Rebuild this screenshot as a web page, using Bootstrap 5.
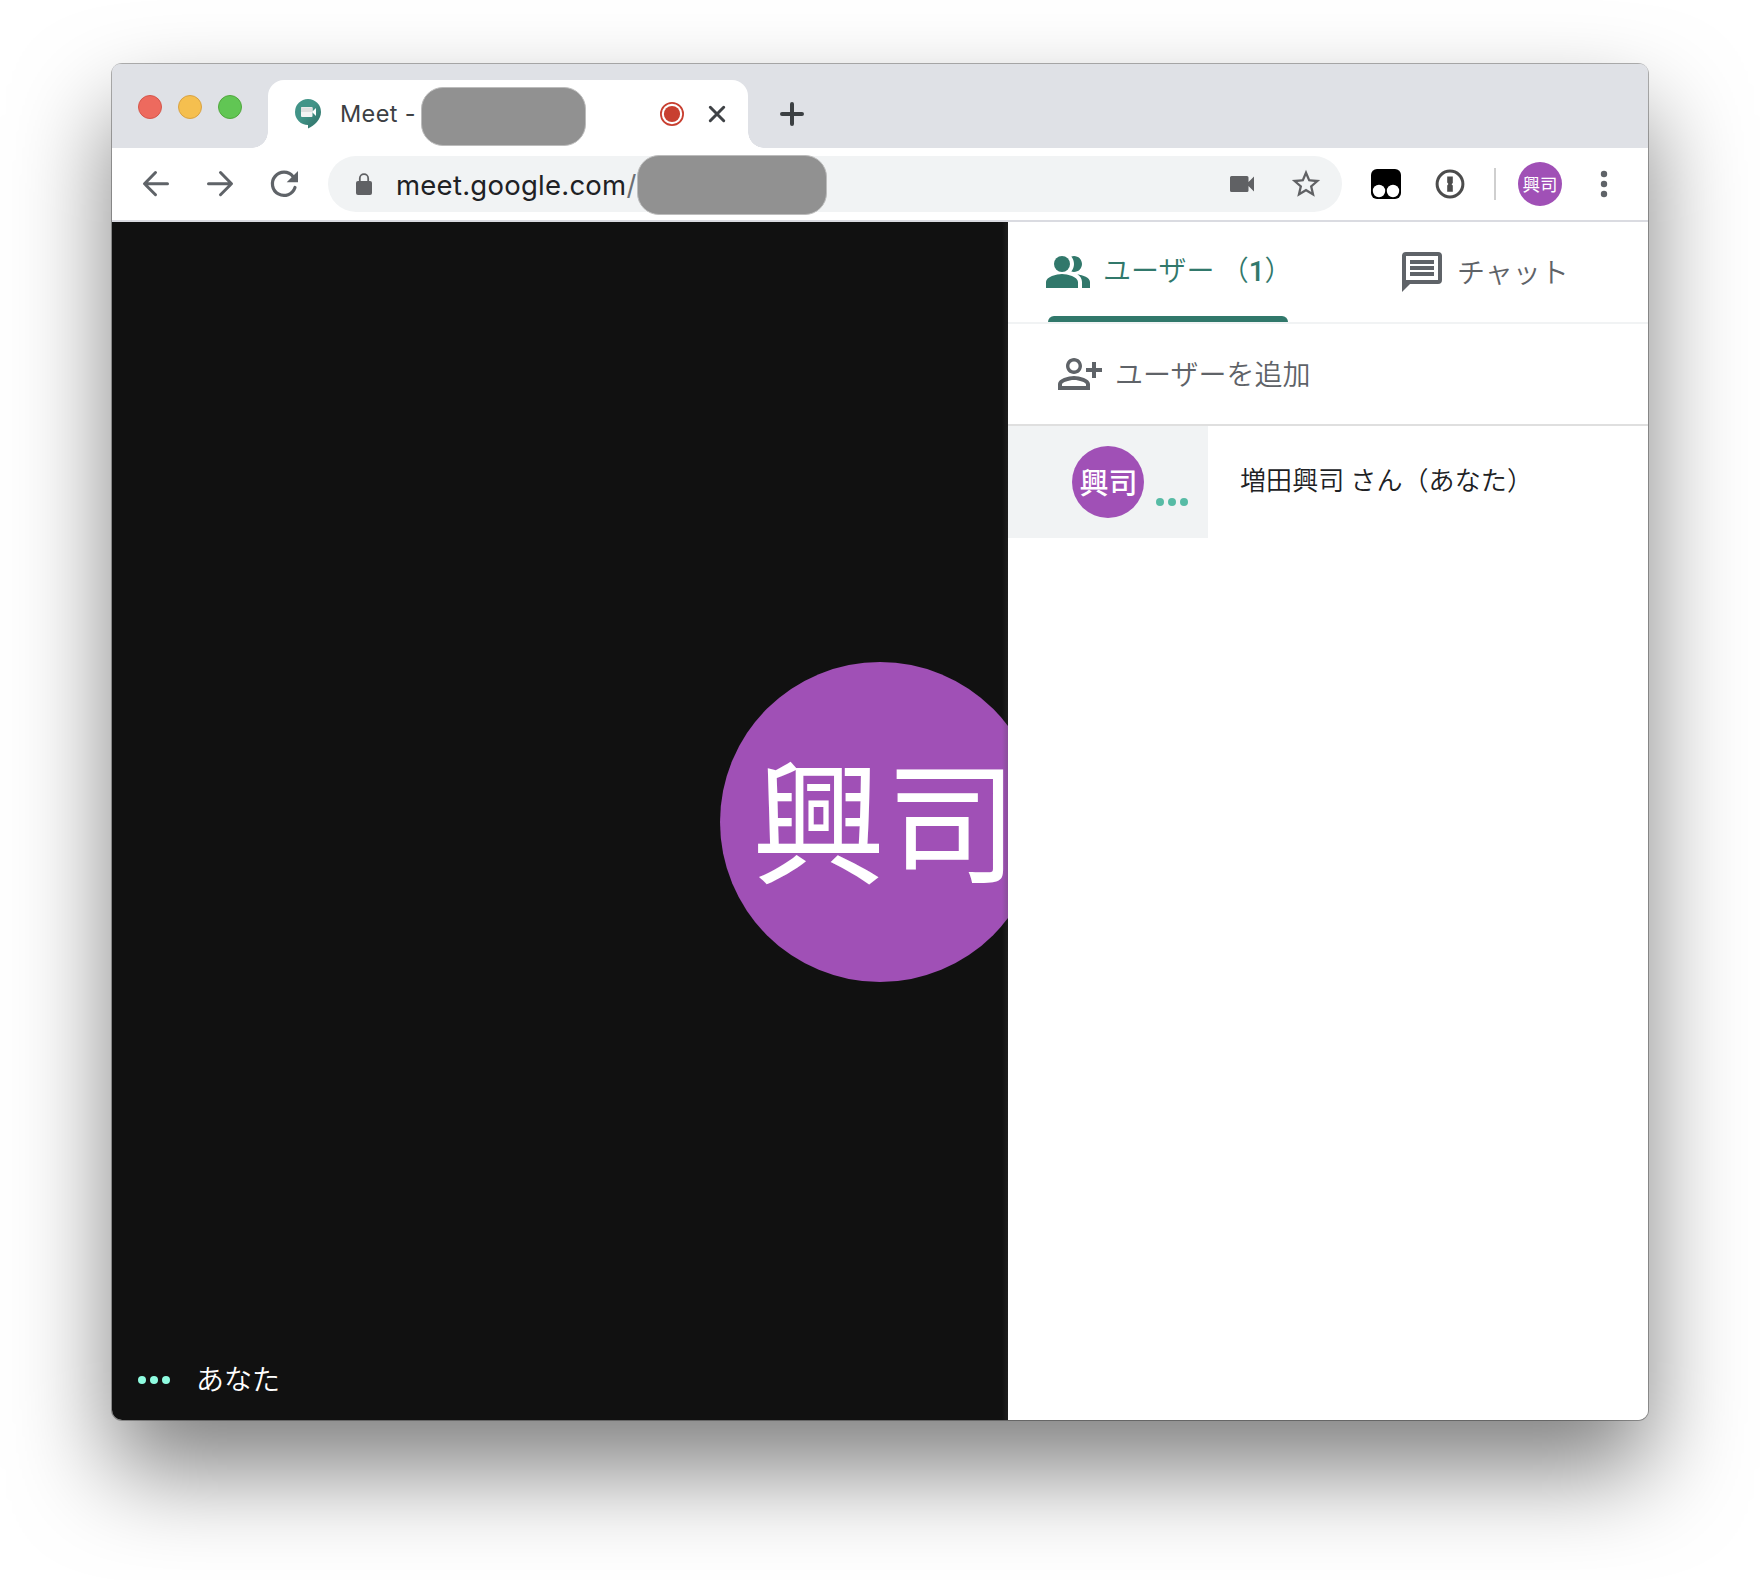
<!DOCTYPE html>
<html lang="ja">
<head>
<meta charset="utf-8">
<meta name="viewport" content="width=device-width, initial-scale=1">
<title>Meet</title>
<link href="https://cdn.jsdelivr.net/npm/bootstrap@5.3.0/dist/css/bootstrap.min.css" rel="stylesheet">
<style>
  body { background: #fff; width: 1760px; height: 1580px; overflow: hidden; padding: 64px 112px 160px; font-family: "Noto Sans CJK JP", sans-serif; }
  svg { display: block; flex: none; }
  .browser-win { height: 1356px; border-radius: 10px; box-shadow: 0 0 0 1px rgba(0,0,0,.3), 0 50px 96px rgba(0,0,0,.5); }
  .tab-strip { height: 84px; background: #dfe1e6; padding-top: 16px; }
  .lights { width: 156px; padding: 15px 0 0 26px; gap: 16px; }
  .light { width: 24px; height: 24px; border-radius: 50%; border: 1px solid; }
  .light-red { background: #ed6a5e; border-color: #d5564b; }
  .light-yellow { background: #f5bf4f; border-color: #d9a243; }
  .light-green { background: #61c654; border-color: #51a73e; }
  .page-tab { width: 480px; height: 68px; background: #fff; border-radius: 16px 16px 0 0; padding-left: 27px; }
  .page-tab::before, .page-tab::after { content: ""; position: absolute; bottom: 0; width: 16px; height: 16px; }
  .page-tab::before { left: -16px; background: radial-gradient(circle at 0 0, transparent 15.5px, #fff 16px); }
  .page-tab::after { right: -16px; background: radial-gradient(circle at 100% 0, transparent 15.5px, #fff 16px); }
  .tab-title { font: 400 23.5px/30px Inter, sans-serif; color: #3c4043; width: 81px; margin-left: 19px; letter-spacing: .35px; }
  .redact { background: #919191; border: 1px solid #bcbcbc; border-radius: 22px; flex: none; }
  .redact-title { width: 165px; height: 59px; margin-top: 4px; }
  .redact-url { width: 190px; height: 60px; margin: 2px 0 0 1px; }
  .tool-bar { height: 74px; border-bottom: 2px solid #dadbe1; background: #fff; padding-left: 28px; }
  .address { width: 1014px; height: 56px; border-radius: 28px; background: #f1f3f4; margin-left: 28px; padding: 0 19px 0 26px; }
  .address-text { font: 400 27.5px/36px Inter, sans-serif; letter-spacing: .25px; color: #202124; width: 240px; margin-left: 22px; padding-top: 2px; white-space: nowrap; }
  .address-text span { color: #6b6f74; }
  .mini-face { width: 44px; height: 44px; font-size: 17.5px; line-height: 44px; }
  .face { background: #a050b6; color: #fff; border-radius: 50%; text-align: center; flex: none; white-space: nowrap; }
  .stage { height: 1198px; }
  .video-pane { width: 896px; background: #111; overflow: hidden; border-bottom-left-radius: 10px; }
  .video-pane::after { content: ""; position: absolute; right: 0; top: 0; bottom: 0; width: 6px; background: linear-gradient(90deg, transparent, rgba(70,70,70,.25)); }
  .big-face { width: 320px; height: 320px; margin: 440px 0 0 608px; padding-left: 10px; font-size: 133px; line-height: 307px; }
  .self-label { height: 40px; margin: 378px 0 0 26px; color: #fff; font-size: 28px; font-weight: 350; line-height: 40px; gap: 26px; }
  .self-label span { padding-bottom: 5px; }
  .side { width: 640px; background: #fff; border-bottom-right-radius: 10px; color: #5f6368; font-size: 28px; font-weight: 350; line-height: 40px; }
  .side-tabs { height: 102px; border-bottom: 2px solid #f1f3f4; }
  .side-tab { width: 320px; height: 100px; white-space: pre; }
  .side-text { margin-left: 11px; padding-bottom: 3px; }
  .side-tab-on { color: #31786b; padding-left: 36px; }
  .side-tab-on b { font-family: Roboto, sans-serif; font-weight: 500; }
  .side-tab-on::after { content: ""; position: absolute; left: 40px; bottom: 0; width: 240px; height: 6px; border-radius: 6px 6px 0 0; background: #31786b; }
  .add-row { height: 102px; border-bottom: 2px solid #dfdfdf; padding-left: 48px; }
  .who-row { height: 112px; }
  .who-tile { width: 200px; height: 112px; background: #f1f3f4; padding: 20px 0 0 64px; }
  .who-face { width: 72px; height: 72px; font-size: 29px; line-height: 71px; font-weight: 500; padding-left: 1px; }
  .who-name { color: #202124; font-size: 26px; margin-left: 32px; padding-top: 33px; letter-spacing: .1px; }
</style>
</head>
<body>
<div class="browser-win overflow-visible">
  <div class="tab-strip d-flex rounded-top-3">
    <div class="lights d-flex">
      <span class="light light-red"></span><span class="light light-yellow"></span><span class="light light-green"></span>
    </div>
    <div class="page-tab position-relative d-flex align-items-center">
      <svg width="26" height="30" viewBox="0 0 26 30"><defs><linearGradient id="hg" x1="0" y1="0" x2="1" y2="1"><stop offset=".45" stop-color="#429488"/><stop offset=".75" stop-color="#367d73"/></linearGradient></defs><path d="M13 0a13 13 0 0 1 13 13c0 7.500-6.500 13.500-13 16.500V26A13 13 0 0 1 13 0z" fill="url(#hg)"/><rect x="6" y="8" width="11.500" height="10" rx="1" fill="#f3f3f3"/><path d="M6 8.500h11.500V13H6z" fill="#dedede"/><path d="M17 13l4-4v8z" fill="#fff"/></svg>
      <span class="tab-title">Meet -</span>
      <span class="redact redact-title"></span>
      <svg width="24" height="24" viewBox="0 0 24 24" style="margin-left:74px"><circle cx="12" cy="12" r="11.100" fill="none" stroke="#c83f30" stroke-width="1.800"/><circle cx="12" cy="12" r="8.100" fill="#c83f30"/></svg>
      <svg width="18" height="18" viewBox="0 0 18 18" class="ms-4"><path d="M2.300 2.300l13.400 13.400M15.700 2.300L2.300 15.700" stroke="#3f4246" stroke-width="3" stroke-linecap="round"/></svg>
    </div>
    <svg width="24" height="24" viewBox="0 0 24 24" style="margin:22px 0 0 32px"><path d="M2 12h20M12 2v20" stroke="#3c4043" stroke-width="4" stroke-linecap="round"/></svg>
  </div>
  <div class="tool-bar d-flex align-items-center">
    <svg width="32" height="32" viewBox="0 0 32 32" fill="none" stroke="#5f6368" stroke-width="3" stroke-linecap="round" stroke-linejoin="round"><path d="M27.500 15.700H4.700M15.500 4.500L4.500 15.700l11 11"/></svg>
    <svg width="32" height="32" viewBox="0 0 32 32" fill="none" stroke="#5f6368" stroke-width="3" stroke-linecap="round" stroke-linejoin="round" style="margin-left:32px"><path d="M4.500 15.700h22.800M16.500 4.500l11 11.200-11 11"/></svg>
    <svg width="32" height="32" viewBox="0 0 32 32" style="margin-left:32px"><path d="M27 19.500A11.600 11.600 0 1 1 25 8.500" fill="none" stroke="#5f6368" stroke-width="3.200" stroke-linecap="round"/><path d="M30 3v11.300H18.700z" fill="#5f6368"/></svg>
    <div class="address d-flex align-items-center">
      <svg width="20" height="24" viewBox="0 0 20 24"><path d="M5.800 10V6.400a4.200 4.200 0 0 1 8.400 0V10" fill="none" stroke="#606164" stroke-width="1.800"/><rect x="2" y="9" width="16" height="14" rx="2" fill="#606164"/></svg>
      <div class="address-text">meet.google.com<span>/</span></div>
      <span class="redact redact-url"></span>
      <svg width="26" height="18" viewBox="0 0 26 18" class="ms-auto" style="margin-right:34px"><path d="M2.500 1H18a1.500 1.500 0 0 1 1.500 1.500V7L25 1.500v15L19.500 11v4.500A1.500 1.500 0 0 1 18 17H2.500A1.500 1.500 0 0 1 1 15.500v-13A1.500 1.500 0 0 1 2.500 1z" fill="#606164"/></svg>
      <svg width="34" height="34" viewBox="0 0 24 24"><path fill="#606164" d="M22 9.240l-7.190-.62L12 2 9.190 8.630 2 9.240l5.460 4.730L5.820 21 12 17.270 18.180 21l-1.630-7.030L22 9.240zM12 15.400l-3.760 2.270 1-4.280-3.320-2.880 4.380-.38L12 6.100l1.710 4.040 4.380.38-3.320 2.880 1 4.280L12 15.400z"/></svg>
    </div>
    <svg width="30" height="30" viewBox="0 0 30 30" style="margin-left:29px"><rect width="30" height="30" rx="6" fill="#000"/><circle cx="8" cy="22" r="6.200" fill="#fff"/><circle cx="22" cy="22" r="6.200" fill="#fff"/></svg>
    <svg width="30" height="30" viewBox="0 0 30 30" style="margin-left:34px"><circle cx="15" cy="15" r="12.900" fill="none" stroke="#4c4c4c" stroke-width="3"/><path d="M12.200 7.500h5.600v6.400l-1.200 1.300 1.200 1.300v6.300h-5.600v-6.300l1.200-1.500-1.200-1.500z" fill="#4c4c4c"/></svg>
    <div style="width:2px;height:32px;background:#cfcfcf;margin-left:29px"></div>
    <div class="face mini-face" style="margin-left:22px">興司</div>
    <svg width="8" height="28" viewBox="0 0 8 28" style="margin-left:38px" fill="#5f6368"><circle cx="4" cy="4" r="3.200"/><circle cx="4" cy="14" r="3.200"/><circle cx="4" cy="24" r="3.200"/></svg>
  </div>
  <div class="stage d-flex">
    <main class="video-pane position-relative">
      <div class="face big-face">興司</div>
      <div class="self-label d-flex align-items-center">
        <svg width="32" height="8" viewBox="0 0 32 8" fill="#8ffce0"><circle cx="4" cy="4" r="4"/><circle cx="16" cy="4" r="4"/><circle cx="28" cy="4" r="4"/></svg>
        <span>あなた</span>
      </div>
    </main>
    <aside class="side">
      <nav class="side-tabs d-flex">
        <div class="side-tab side-tab-on position-relative d-flex align-items-center"><svg width="48" height="48" viewBox="0 0 24 24" fill="currentColor"><circle cx="9" cy="8" r="4"/><path d="M9 13c-2.670 0-8 1.340-8 4v3h16v-3c0-2.660-5.330-4-8-4zM15 12c2.210 0 4-1.790 4-4s-1.790-4-4-4c-.47 0-.91.100-1.330.240C14.500 5.270 15 6.580 15 8s-.5 2.730-1.330 3.760c.42.140.86.240 1.330.240zM16.670 13.130C18.040 14.060 19 15.320 19 17v3h4v-3c0-2.180-3.570-3.470-6.330-3.870z"/></svg><span class="side-text">ユーザー （<b>1</b>）</span></div>
        <div class="side-tab d-flex align-items-center" style="padding-left:70px"><svg width="48" height="48" viewBox="0 0 24 24" fill="currentColor"><path fill-rule="evenodd" d="M4 2h16a2 2 0 0 1 2 2v12a2 2 0 0 1-2 2H6l-4 4V4a2 2 0 0 1 2-2zm0 2v12h16V4z"/><path d="M6 6h12v2H6zM6 9h12v2H6zM6 12h12v2H6z"/></svg><span class="side-text">チャット</span></div>
      </nav>
      <div class="add-row d-flex align-items-center">
        <svg width="48" height="48" viewBox="0 0 24 24" fill="currentColor"><path d="M20 9V6h-2v3h-3v2h3v3h2v-3h3V9zM9 12c2.210 0 4-1.790 4-4s-1.790-4-4-4-4 1.790-4 4 1.790 4 4 4zm0-6.300a2.300 2.300 0 1 1 0 4.600 2.300 2.300 0 0 1 0-4.600zM9 13c-2.670 0-8 1.340-8 4v3h16v-3c0-2.660-5.330-4-8-4zm6 5H3v-.99C3.200 16.290 6.300 15 9 15s5.800 1.290 6 2.010z"/></svg>
        <span class="side-text">ユーザーを追加</span>
      </div>
      <div class="who-row d-flex">
        <div class="who-tile d-flex">
          <div class="face who-face">興司</div>
          <svg width="32" height="8" viewBox="0 0 32 8" fill="#57bba5" style="margin:52px 0 0 12px"><circle cx="4" cy="4" r="4"/><circle cx="16" cy="4" r="4"/><circle cx="28" cy="4" r="4"/></svg>
        </div>
        <div class="who-name">増田興司 さん（あなた）</div>
      </div>
    </aside>
  </div>
</div>
<script src="https://cdn.jsdelivr.net/npm/bootstrap@5.3.0/dist/js/bootstrap.bundle.min.js"></script>
</body>
</html>
